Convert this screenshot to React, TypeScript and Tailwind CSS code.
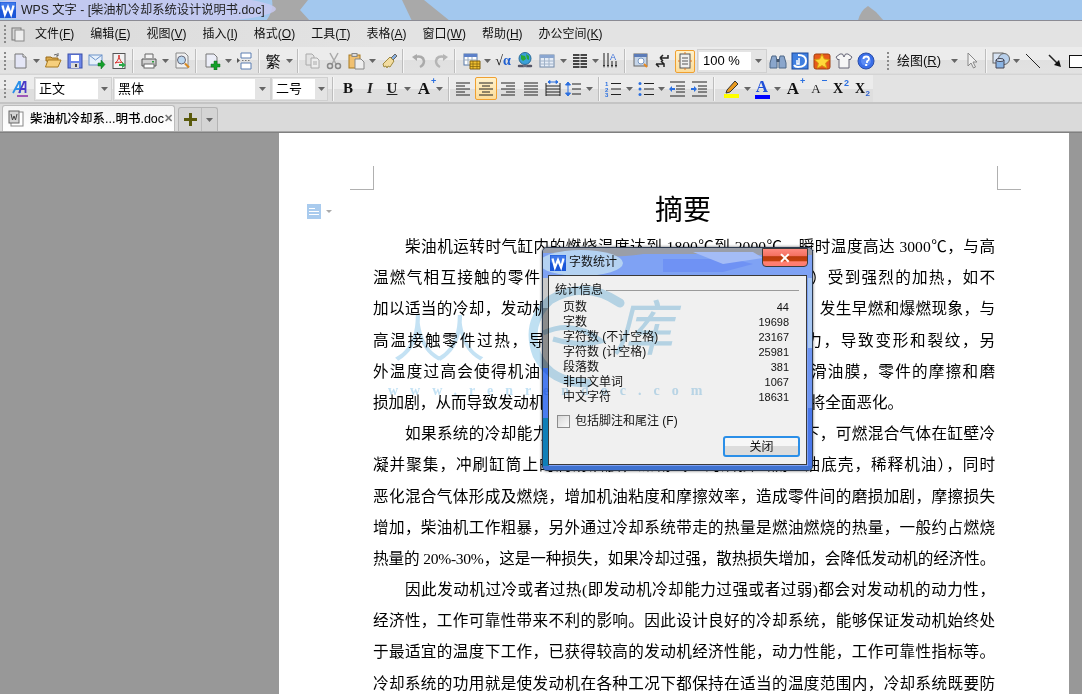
import type { ReactNode } from 'react';

const BODY_LINES: { text: string; indent?: boolean; left?: boolean; tight?: boolean }[] = [
    { text: '柴油机运转时气缸内的燃烧温度达到 1800℃到 2000℃，瞬时温度高达 3000℃，与高', indent: true },
    { text: '温燃气相互接触的零件（如气缸盖、活塞、气缸套及气门等）受到强烈的加热，如不' },
    { text: '加以适当的冷却，发动机会过热，充气效率下降，燃烧不正常，发生早燃和爆燃现象，与' },
    { text: '高温接触零件过热，导致机械性能下降，产生较大的热应力，导致变形和裂纹，另' },
    { text: '外温度过高会使得机油变质，粘度下降，难以形成良好的润滑油膜，零件的摩擦和磨' },
    { text: '损加剧，从而导致发动机动力性、经济性、可靠性等各项性能都将全面恶化。', left: true },
    { text: '如果系统的冷却能力过强，发动机长期在过冷的工作条件下，可燃混合气体在缸壁冷', indent: true },
    { text: '凝并聚集，冲刷缸筒上的润滑油膜，加剧气缸的磨损（流入油底壳，稀释机油），同时' },
    { text: '恶化混合气体形成及燃烧，增加机油粘度和摩擦效率，造成零件间的磨损加剧，摩擦损失' },
    { text: '增加，柴油机工作粗暴，另外通过冷却系统带走的热量是燃油燃烧的热量，一般约占燃烧' },
    { text: '热量的 20%-30%，这是一种损失，如果冷却过强，散热损失增加，会降低发动机的经济性。', tight: true },
    { text: '因此发动机过冷或者过热(即发动机冷却能力过强或者过弱)都会对发动机的动力性，', indent: true },
    { text: '经济性，工作可靠性带来不利的影响。因此设计良好的冷却系统，能够保证发动机始终处' },
    { text: '于最适宜的温度下工作，已获得较高的发动机经济性能，动力性能，工作可靠性指标等。' },
    { text: '冷却系统的功用就是使发动机在各种工况下都保持在适当的温度范围内，冷却系统既要防' },
];

const STATS = [
    ['页数', '44'],
    ['字数', '19698'],
    ['字符数 (不计空格)', '23167'],
    ['字符数 (计空格)', '25981'],
    ['段落数', '381'],
    ['非中文单词', '1067'],
    ['中文字符', '18631'],
];

const MENUS = [
    ['文件', 'F'],
    ['编辑', 'E'],
    ['视图', 'V'],
    ['插入', 'I'],
    ['格式', 'O'],
    ['工具', 'T'],
    ['表格', 'A'],
    ['窗口', 'W'],
    ['帮助', 'H'],
    ['办公空间', 'K'],
];

function Ico({ children }: { children: ReactNode }) {
    return (
        <svg width="18" height="18" viewBox="0 0 18 18" fill="none">
            {children}
        </svg>
    );
}

function Btn({ children, className = '' }: { children: ReactNode; className?: string }) {
    return <div className={`w-[22px] h-[22px] shrink-0 flex items-center justify-center ${className}`}>{children}</div>;
}

function Drop({ className = 'w-[11px]' }: { className?: string }) {
    return (
        <div className={`${className} shrink-0 flex items-center justify-center`}>
            <svg width="7" height="4" viewBox="0 0 7 4">
                <path d="M0 0h7L3.5 4z" fill="#666" />
            </svg>
        </div>
    );
}

function Sep({ className = '' }: { className?: string }) {
    return (
        <div className={`w-[6px] h-[24px] shrink-0 flex justify-center ${className}`}>
            <div className="w-px bg-[#bdbdbd] border-r border-[#f6f6f6] box-content" />
        </div>
    );
}

function Grip({ className = '' }: { className?: string }) {
    return (
        <div className={`w-[9px] shrink-0 flex flex-col items-center gap-[2px] ${className}`}>
            <i className="block w-[2px] h-[2px] bg-[#8a8a8a]" />
            <i className="block w-[2px] h-[2px] bg-[#8a8a8a]" />
            <i className="block w-[2px] h-[2px] bg-[#8a8a8a]" />
            <i className="block w-[2px] h-[2px] bg-[#8a8a8a]" />
            <i className="block w-[2px] h-[2px] bg-[#8a8a8a]" />
        </div>
    );
}

function WLogo({ size = 16 }: { size?: number }) {
    return (
        <svg width={size} height={size} viewBox="0 0 16 16" className="shrink-0">
            <rect width="16" height="16" fill="#1a56d8" />
            <rect x="0.5" y="0.5" width="15" height="7" fill="#3f78ea" />
            <path d="M2.5 3.5l2.4 9 3.1-7.5 3.1 7.5 2.4-9" stroke="#fff" strokeWidth="2.2" fill="none" />
        </svg>
    );
}

const NewDoc = () => (
    <Ico>
        <path d="M4 2h8l3 3v11H4z" fill="#e4e6f6" stroke="#777" />
        <path d="M12 2v3h3" fill="#fff" stroke="#777" />
    </Ico>
);
const OpenIco = () => (
    <Ico>
        <path d="M2 5h5l1 1h6v3H2z" fill="#d9a94c" stroke="#9a6a18" />
        <path d="M1.5 15l2.5-7h13l-3 7z" fill="#f6cf7c" stroke="#a87a20" />
        <path d="M10 3q3-2 4 1M14 1v3h-2" stroke="#666" />
    </Ico>
);
const SaveIco = () => (
    <Ico>
        <rect x="2" y="2" width="14" height="14" fill="#6d86e8" stroke="#3b4fa8" />
        <rect x="5" y="3" width="8" height="6" fill="#fff" />
        <rect x="5" y="11" width="8" height="5" fill="#dcdcdc" />
        <rect x="9" y="12" width="2" height="3" fill="#444" />
    </Ico>
);
const MailIco = () => (
    <Ico>
        <rect x="1" y="3" width="13" height="10" fill="#e6f0fb" stroke="#6d93c9" />
        <path d="M1 3l6.500 5 6.500-5" stroke="#6d93c9" />
        <path d="M10 11h3V8l4 4.500-4 4.500v-3h-3z" fill="#14a02a" stroke="#0c6a1a" strokeWidth=".5" />
    </Ico>
);
const PdfIco = () => (
    <Ico>
        <rect x="3" y="1.500" width="12" height="15" fill="#f2f2f2" stroke="#555" />
        <path d="M9 3c0 4-2 7-4 8 3-1 6-1 8 0-2-1-4-4-4-8z" stroke="#d9302a" />
        <path d="M9 12h3v-2l4 3-4 3v-2H9z" fill="#2ea84a" />
    </Ico>
);
const PrintIco = () => (
    <Ico>
        <path d="M5 6V2h8v4" fill="#f4f4f4" stroke="#666" />
        <path d="M2 7h14v7H2z" fill="#d2d2d2" stroke="#555" />
        <rect x="4" y="12" width="10" height="4" fill="#fff" stroke="#666" />
        <rect x="12" y="9" width="2" height="1.500" fill="#2a9a3a" />
    </Ico>
);
const PreviewIco = () => (
    <Ico>
        <path d="M3 1h9l3 3v12H3z" fill="#f0f0f0" stroke="#888" />
        <circle cx="8.500" cy="8" r="4" fill="#bcd8f0" stroke="#667" />
        <path d="M12 11.500l4 4" stroke="#d98a20" strokeWidth="2.200" />
    </Ico>
);
const NewPlusIco = () => (
    <Ico>
        <path d="M3 2h8l3 3v10H3z" fill="#eceef8" stroke="#777" />
        <path d="M11 9h3v3h3v3h-3v3h-3v-3H8v-3h3z" fill="#14a02a" stroke="#0c6a1a" strokeWidth=".5" />
    </Ico>
);
const SplitIco = () => (
    <Ico>
        <path d="M5 1h10v5H5zM5 11h10v6H5z" fill="#fff" stroke="#5d7fb2" />
        <path d="M1 6l3 2.500L1 11z" fill="#555" />
        <path d="M6 8.500h1.500M9 8.500h1.500M12 8.500h1.500" stroke="#777" />
    </Ico>
);
const CopyIco = () => (
    <Ico>
        <path d="M3 2h6l2 2v9H3z" fill="#e3e3e3" stroke="#aaa" />
        <path d="M8 6h6l2 2v8H8z" fill="#ededed" stroke="#aaa" />
        <path d="M10 10h4M10 12h4" stroke="#aaa" />
    </Ico>
);
const CutIco = () => (
    <Ico>
        <path d="M5 1l6 11M13 1L7 12" stroke="#aaa" strokeWidth="1.500" />
        <circle cx="5" cy="14" r="2.500" stroke="#888" strokeWidth="1.500" />
        <circle cx="13" cy="14" r="2.500" stroke="#888" strokeWidth="1.500" />
    </Ico>
);
const PasteIco = () => (
    <Ico>
        <rect x="2" y="3" width="11" height="13" fill="#f0c070" stroke="#a87a20" />
        <rect x="5" y="1.500" width="5" height="3" fill="#ddd" stroke="#888" />
        <path d="M8 7h6l3 3v7H8z" fill="#eee" stroke="#888" />
    </Ico>
);
const BrushIco = () => (
    <Ico>
        <path d="M11 6l4-4 2 2-4 4z" fill="#8ab0dd" stroke="#666" />
        <path d="M3 12l7-7 4 4-4 6-2-1-1 2-1-2-2 1z" fill="#f2dca0" stroke="#a08a40" />
    </Ico>
);
const UndoIco = () => (
    <Ico>
        <path d="M5 5q8-2 9 4 0 4-4 6" stroke="#aaa" strokeWidth="2.500" />
        <path d="M2 5l5-3v7z" fill="#aaa" />
    </Ico>
);
const RedoIco = () => (
    <Ico>
        <path d="M13 5q-8-2-9 4 0 4 4 6" stroke="#b5b5b5" strokeWidth="2.500" />
        <path d="M16 5l-5-3v7z" fill="#b5b5b5" />
    </Ico>
);
const TableIco = () => (
    <Ico>
        <rect x="1" y="2" width="13" height="11" fill="#fff" stroke="#5678a8" />
        <rect x="1" y="2" width="13" height="3" fill="#5c80c8" />
        <path d="M5 5v8M9 5v8M1 8h13" stroke="#9ab" />
        <path d="M7 9h10v8H7z" fill="#f0c030" stroke="#806010" />
        <path d="M10 9v8M14 9v8M7 12h10M7 14.500h10" stroke="#806010" strokeWidth=".7" />
    </Ico>
);
const GlobeIco = () => (
    <Ico>
        <circle cx="9" cy="6.500" r="6" fill="#3aa0d8" stroke="#2a6a98" />
        <path d="M5 3l4 1 1 3-3 2-2-2zM10 2l3 2 0 4-2-1z" fill="#28a838" />
        <path d="M3 14h5M10 14h5" stroke="#556" strokeWidth="2.500" strokeLinecap="round" />
        <path d="M7 14h4" stroke="#889" />
    </Ico>
);
const GridIco = () => (
    <Ico>
        <rect x="2" y="3" width="14" height="12" fill="#e6edf7" stroke="#7088a8" />
        <rect x="2" y="3" width="14" height="3" fill="#8aa6d0" />
        <path d="M6.500 6v9M11 6v9M2 9h14M2 12h14" stroke="#a0b2c8" />
    </Ico>
);
const ColsIco = () => (
    <Ico>
        <path d="M2 3h14M2 6h14M2 9h14M2 12h14M2 15h14" stroke="#111" strokeWidth="1.500" />
        <path d="M9 2v14" stroke="#e2e2e2" />
    </Ico>
);
const SortIco = () => (
    <Ico>
        <path d="M2 1v13M6 1v13M10 9v5M14 9v5" stroke="#222" />
        <path d="M1 13h2l-1 3zM5 13h2l-1 3zM9 13h2l-1 3zM13 13h2l-1 3z" fill="#222" />
        <text x="8" y="8" fontSize="9" fill="#3a6fd8" fontFamily="Liberation Sans">A</text>
    </Ico>
);
const FormIco = () => (
    <Ico>
        <rect x="2" y="2" width="13" height="12" fill="#c6d6ea" stroke="#666" />
        <rect x="2" y="2" width="13" height="3" fill="#5c7cb8" />
        <circle cx="9" cy="9" r="3" fill="#fff" stroke="#7a98c0" />
        <path d="M12 12l3 3" stroke="#e88a20" strokeWidth="2" />
    </Ico>
);
const ReviewIco = () => (
    <Ico>
        <path d="M15 3v3H7M7 6l3-3M7 6l3 3" stroke="#222" strokeWidth="1.500" />
        <path d="M3 12h8v3M11 12l-3-3M3 12l3 3" stroke="#222" strokeWidth="1.500" />
    </Ico>
);
const PageIco = () => (
    <Ico>
        <rect x="4" y="2" width="10" height="14" fill="#efefef" stroke="#555" />
        <path d="M6 6h6M6 9h6M6 12h6" stroke="#555" />
        <path d="M2 9h2M14 9h2M9 0v2M9 16v2" stroke="#d8742a" />
    </Ico>
);
const BinoIco = () => (
    <Ico>
        <path d="M3 4h4l1 5v7H1v-5zM15 4h-4l-1 5v7h7v-5z" fill="#8aa6cc" stroke="#4f6888" />
        <rect x="7.500" y="7" width="3" height="3" fill="#44566e" />
    </Ico>
);
const BlueIco = () => (
    <Ico>
        <rect x="1" y="1" width="16" height="16" fill="#3f7fe0" stroke="#1d4a9c" />
        <path d="M7 3q8 0 8 6t-8 6q-3 0-4-2" stroke="#fff" strokeWidth="2" />
        <path d="M8 6v6H6V8" stroke="#fff" strokeWidth="1.500" />
    </Ico>
);
const StarIco = () => (
    <Ico>
        <rect x="1" y="2" width="16" height="15" rx="2" fill="#e85a1c" stroke="#a0400c" />
        <path d="M9 2l2.300 5 5 .6-3.700 3.500 1 5L9 13.600 4.400 16.100l1-5L1.700 7.600l5-.6z" fill="#ffd83a" stroke="#d89a10" />
    </Ico>
);
const ShirtIco = () => (
    <Ico>
        <path d="M5 2h2.500L9 5l1.500-3H13l4 3-2 3-1-1v9H4V7L3 8 1 5z" fill="#f6f6f6" stroke="#667" />
    </Ico>
);
const HelpIco = () => (
    <Ico>
        <circle cx="9" cy="9" r="8" fill="#3a6ee8" stroke="#2a4ea8" />
        <circle cx="9" cy="9" r="5" fill="#5c8cf4" />
        <path d="M6.500 7q0-2.500 2.700-2.500T12 7q0 1.500-2 2.300V11" stroke="#fff" strokeWidth="1.800" />
        <rect x="8.200" y="12" width="2" height="2" fill="#fff" />
    </Ico>
);
const CursorIco = () => (
    <Ico>
        <path d="M5 1v13l3-3 2.500 5 2-1-2.500-5h4z" fill="#f0f0f0" stroke="#888" />
    </Ico>
);
const ShapesIco = () => (
    <Ico>
        <rect x="1" y="1" width="10" height="10" fill="#d8e4f4" stroke="#666" />
        <circle cx="12" cy="7" r="5.500" fill="#b8d0ec" stroke="#666" />
        <path d="M4 8h8v8H4z" fill="#8ab4e4" stroke="#445" />
        <ellipse cx="8" cy="8" rx="4" ry="1.500" fill="#cfe2f6" stroke="#445" />
    </Ico>
);
const LineIco = () => (
    <Ico>
        <path d="M2 2l14 14" stroke="#222" />
    </Ico>
);
const ArrowLineIco = () => (
    <Ico>
        <path d="M3 3l9 9" stroke="#222" strokeWidth="1.500" />
        <path d="M15 15l-7-2 5-5z" fill="#111" />
    </Ico>
);
const StyleIco = () => (
    <Ico>
        <path d="M1 13L7 2h1v11M3.500 9H8" stroke="#2a8fe8" strokeWidth="1.800" />
        <path d="M7 13l5-11h1.500v11M9 9h5" stroke="#4a3ac8" strokeWidth="1.800" />
        <path d="M5 16h11" stroke="#8a2aa8" strokeWidth="1.500" />
    </Ico>
);
const Lines = ({ mode }: { mode: 'l' | 'c' | 'r' | 'j' }) => {
    const short = mode === 'l' ? 'M2 6h9M2 12h9' : mode === 'c' ? 'M5 6h8M5 12h8' : mode === 'r' ? 'M7 6h9M7 12h9' : 'M2 6h14M2 12h14';
    return (
        <Ico>
            <path d={`M2 3h14M2 9h14M2 15h14 ${short}`} stroke="#222" />
        </Ico>
    );
};
const DistIco = () => (
    <Ico>
        <path d="M2 6h14M2 9h14M2 12h14M2 15h14M2 3v13M16 3v13" stroke="#222" />
        <path d="M4 2h10M4 2l2-1.500v3zM14 2l-2-1.500v3z" stroke="#2a6fe0" fill="#2a6fe0" />
    </Ico>
);
const SpacingIco = () => (
    <Ico>
        <path d="M7 4h9M7 9h9M7 14h9" stroke="#222" />
        <path d="M3 2l2.500 3h-5zM3 16l2.500-3h-5zM3 5v8" fill="#2a6fe0" stroke="#2a6fe0" />
    </Ico>
);
const NumIco = () => (
    <Ico>
        <path d="M7 3.500h10M7 9h10M7 14.500h10" stroke="#222" />
        <text x="1" y="6" fontSize="6" fill="#2a6fe0" fontFamily="Liberation Sans" fontWeight="700">1</text>
        <text x="1" y="11.500" fontSize="6" fill="#2a6fe0" fontFamily="Liberation Sans" fontWeight="700">2</text>
        <text x="1" y="17" fontSize="6" fill="#2a6fe0" fontFamily="Liberation Sans" fontWeight="700">3</text>
    </Ico>
);
const BulletIco = () => (
    <Ico>
        <path d="M7 3.500h10M7 9h10M7 14.500h10" stroke="#222" />
        <circle cx="3" cy="3.500" r="1.500" fill="#2a6fe0" />
        <circle cx="3" cy="9" r="1.500" fill="#2a6fe0" />
        <circle cx="3" cy="14.500" r="1.500" fill="#2a6fe0" />
    </Ico>
);
const IndentIco = ({ flip }: { flip?: boolean }) => (
    <Ico>
        <path d="M2 2h15M8 6h9M8 9h9M8 12h9M2 16h15" stroke="#222" />
        {flip ? (
            <path d="M7 8v2H4v2L1 9l3-3v2z" fill="#2a6fe0" />
        ) : (
            <path d="M1 8v2h3v2l3-3-3-3v2z" fill="#2a6fe0" />
        )}
    </Ico>
);
const PenIco = () => (
    <svg width="16" height="20" viewBox="0 0 16 20" fill="none">
        <path d="M3 11l8-9 3 3-8 8-4 1z" fill="#e89a20" stroke="#333" />
        <rect x="0" y="15" width="15" height="4" fill="#ffff00" />
    </svg>
);
const ColorA = () => (
    <div className="relative w-[16px] h-[20px] flex flex-col items-center">
        <span className="font-['Liberation_Serif',serif] font-bold text-[17px] leading-[16px] text-[#1f4fd8]">A</span>
        <i className="block w-[15px] h-[4px] bg-[#0000ff]" />
    </div>
);
const SerifGlyph = ({ ch, className, sup, sub }: { ch: string; className: string; sup?: string; sub?: string }) => (
    <span className={`relative font-['Liberation_Serif',serif] font-bold text-[#111] ${className}`}>
        {ch}
        {sup && <span className="absolute -right-[6px] -top-[3px] text-[9px] leading-[9px] font-['Liberation_Sans',sans-serif] text-[#2a6fe0]">{sup}</span>}
        {sub && <span className="absolute -right-[5px] -bottom-[2px] text-[8px] leading-[8px] font-['Liberation_Sans',sans-serif] text-[#2a5fd0]">{sub}</span>}
    </span>
);

function Select({ label, className, boxClass }: { label: string; className: string; boxClass: string }) {
    return (
        <div className={`h-[24px] shrink-0 flex items-center bg-[#e4e4e4] border border-[#d0d0d0] ${className}`}>
            <div className={`h-[20px] bg-white flex items-center text-[13px] text-black ml-[1px] pl-[3px] ${boxClass}`}>{label}</div>
            <Drop className="flex-1" />
        </div>
    );
}

function WordStatsDialog() {
    return (
        <div className="absolute left-[542px] top-[247px] w-[271px] h-[224px] rounded-[5px] border border-[#2c3a50] bg-[#7fa2f4] flex flex-col overflow-hidden shadow-[0_0_3px_rgba(0,0,0,0.6)]">
            {/* glass patches */}
            <svg className="absolute inset-0" width="271" height="224" viewBox="0 0 271 224">
                <path d="M0 0h271v7H215q-30 6-55-1h-60Q60 12 30 5H0z" fill="#9a9ea8" />
                <path d="M120 11h70l20 5-30 8h-60z" fill="#6f92f4" />
                <path d="M150 4h60l10 6-40 6z" fill="#a4bcf6" />
                <ellipse cx="38" cy="15" rx="42" ry="13" fill="#b4d2f2" />
                <path d="M0 30h6v30H0z" fill="#c9c9c9" />
                <path d="M0 60h6v60H0z" fill="#8c8c8c" />
                <path d="M0 120h6v50H0z" fill="#4a7cf0" />
                <path d="M0 170h6v54H0z" fill="#0f7fb8" />
                <path d="M265 30h6v70h-6z" fill="#a8c8f4" />
                <path d="M265 100h6v60h-6z" fill="#6f96f2" />
                <path d="M265 160h6v64h-6z" fill="#4a78ea" />
                <path d="M0 218h271v6H0z" fill="#3f72d0" />
            </svg>
            <div className="relative h-[27px] shrink-0 flex items-start">
                <div className="mt-[7px] ml-[7px]">
                    <WLogo size={16} />
                </div>
                <span className="ml-[3px] mt-[6px] text-[12px] leading-[16px] text-[#111]">字数统计</span>
                <div className="ml-auto mr-[4px] w-[46px] h-[19px] rounded-b-[4px] border border-[#3c3c3c] bg-[linear-gradient(#ff8a80_0%,#f47060_40%,#b83a0c_45%,#c4400c_70%,#ff8070_75%,#ff7a70_100%)] flex items-center justify-center text-white font-bold text-[14px] leading-none font-['Liberation_Sans',sans-serif]">
                    ✕
                </div>
            </div>
            <div className="relative mx-[5px] mb-[5px] flex-1 bg-[#f0f0f0] border border-[#3a3a3a] pl-[6px] pr-[7px] pt-[6px] text-[12px] text-[#111]">
                <div className="flex items-center h-[16px]">
                    <span className="leading-[16px]">统计信息</span>
                    <div className="flex-1 h-px bg-[#9a9a9a] ml-[3px]" />
                </div>
                <div className="mt-[2px] pl-[8px] pr-[10px]">
                    {STATS.map(([k, v]) => (
                        <div key={k} className="flex justify-between h-[15px] items-center leading-[15px]">
                            <span className="whitespace-nowrap">{k}</span>
                            <span className="text-[11px]">{v}</span>
                        </div>
                    ))}
                </div>
                <div className="flex items-center mt-[8px] ml-[2px]">
                    <div className="w-[13px] h-[13px] border border-[#8c8c8c] bg-[linear-gradient(135deg,#d8d8d8,#fafafa)]" />
                    <span className="ml-[5px] leading-[16px]">包括脚注和尾注 (F)</span>
                </div>
                <div className="flex justify-end mt-[7px] -mr-[1px]">
                    <div className="w-[77px] h-[21px] rounded-[3px] border-2 border-[#2b8fe8] bg-[linear-gradient(#f6f6f6_50%,#dcdcdc_50%)] flex items-center justify-center">关闭</div>
                </div>
            </div>
        </div>
    );
}

export default function App() {
    return (
        <div className="relative w-[1082px] h-[694px] overflow-hidden flex flex-col bg-[#989898] font-['Liberation_Sans','Noto_Sans_CJK_SC',sans-serif] text-[12px] text-[#111]">
            {/* title bar */}
            <div className="relative h-[21px] shrink-0 bg-[#a3c8ee] flex items-center overflow-hidden border-b border-[#8b8b94]">
                <svg className="absolute inset-0" width="1082" height="21" viewBox="0 0 1082 21">
                    <path d="M272 0h36l-8 10 10 11h-44q8-10 6-21z" fill="#a8a8a8" />
                    <path d="M402 0h22l26 21h-38z" fill="#a9a9a9" />
                    <path d="M858 21q2-10 10-15l8 6 8 9z" fill="#a9a9a9" />
                    <ellipse cx="130" cy="9" rx="146" ry="16" fill="#c8c9f0" opacity="0.85" />
                </svg>
                <div className="relative flex items-center">
                    <WLogo size={16} />
                    <span className="ml-[5px] text-[12.25px] leading-[18px] text-[#222] whitespace-nowrap">WPS 文字 - [柴油机冷却系统设计说明书.doc]</span>
                </div>
            </div>

            {/* menu bar */}
            <div className="h-[26px] shrink-0 flex items-center bg-[linear-gradient(90deg,#dadada,#e3e3e3_35%)]">
                <Grip />
                <div className="w-[16px] flex items-center justify-center">
                    <svg width="15" height="15" viewBox="0 0 15 15">
                        <rect x="2" y="1" width="9" height="12" fill="#d8d8d8" stroke="#777" />
                        <rect x="5" y="3" width="9" height="11" fill="#eee" stroke="#888" />
                    </svg>
                </div>
                <div className="flex items-center gap-[16px] ml-[10px]">
                    {MENUS.map(([name, key]) => (
                        <span key={name} className="leading-[16px] whitespace-nowrap">
                            {name}(<span className="underline">{key}</span>)
                        </span>
                    ))}
                </div>
            </div>

            {/* standard toolbar */}
            <div className="h-[28px] shrink-0 flex items-center bg-[linear-gradient(#ececec_45%,#e0e0e0_45%,#e2e2e2_92%,#d0d0d0)]">
                <Grip />
                <Btn><NewDoc /></Btn>
                <Drop />
                <Btn><OpenIco /></Btn>
                <Btn><SaveIco /></Btn>
                <Btn><MailIco /></Btn>
                <Btn><PdfIco /></Btn>
                <Sep />
                <Btn className="ml-[2px]"><PrintIco /></Btn>
                <Drop />
                <Btn><PreviewIco /></Btn>
                <Sep />
                <Btn className="ml-[2px]"><NewPlusIco /></Btn>
                <Drop />
                <Btn><SplitIco /></Btn>
                <Sep />
                <Btn><span className="text-[15px] leading-none">繁</span></Btn>
                <Drop />
                <Sep />
                <Btn><CopyIco /></Btn>
                <Btn><CutIco /></Btn>
                <Btn><PasteIco /></Btn>
                <Drop />
                <Btn><BrushIco /></Btn>
                <Sep />
                <Btn className="ml-[2px]"><UndoIco /></Btn>
                <Btn><RedoIco /></Btn>
                <Sep />
                <Btn className="ml-[3px]"><TableIco /></Btn>
                <Drop className="w-[9px]" />
                <Btn><span className="font-['Liberation_Serif',serif] text-[14px] leading-none whitespace-nowrap">√<span className="text-[#1f5fd0] font-bold">α</span></span></Btn>
                <Btn><GlobeIco /></Btn>
                <Btn><GridIco /></Btn>
                <Drop />
                <Btn><ColsIco /></Btn>
                <Drop className="w-[9px]" />
                <Btn><SortIco /></Btn>
                <Sep />
                <Btn className="ml-[2px]"><FormIco /></Btn>
                <Btn className="!w-[20px]"><ReviewIco /></Btn>
                <div className="ml-[3px] w-[20px] h-[23px] shrink-0 rounded-[2px] border border-[#f0a030] bg-[linear-gradient(#fff2cc,#fcdc9a)] flex items-center justify-center">
                    <PageIco />
                </div>
                <div className="ml-[2px] w-[70px] h-[24px] shrink-0 flex items-center bg-[#e4e4e4] border border-[#d0d0d0]">
                    <div className="w-[52px] h-[18px] bg-white ml-[1px] pl-[4px] flex items-center text-[13px] text-black whitespace-nowrap">100 %</div>
                    <Drop className="flex-1" />
                </div>
                <Btn><BinoIco /></Btn>
                <Btn><BlueIco /></Btn>
                <Btn><StarIco /></Btn>
                <Btn><ShirtIco /></Btn>
                <Btn><HelpIco /></Btn>
                <Grip className="ml-[6px]" />
                <span className="ml-[5px] w-[40px] text-[13px] leading-[16px] whitespace-nowrap">绘图(<span className="underline">R</span>)</span>
                <Drop className="ml-[12px] w-[10px]" />
                <Btn className="ml-[2px]"><CursorIco /></Btn>
                <Sep />
                <Btn className="ml-[1px]"><ShapesIco /></Btn>
                <Drop className="w-[9px]" />
                <Btn className="ml-[1px]"><LineIco /></Btn>
                <Btn><ArrowLineIco /></Btn>
                <div className="ml-[3px] w-[20px] h-[13px] shrink-0 border border-[#111] bg-white" />
            </div>

            {/* format toolbar */}
            <div className="h-[29px] shrink-0 flex items-center bg-[#e3e3e3] border-b-2 border-[#c4c4c4]">
                <div className="w-[873px] h-full shrink-0 flex items-center bg-[linear-gradient(#ececec_50%,#dedede_50%)]">
                    <Grip />
                    <Btn className="ml-[1px]"><StyleIco /></Btn>
                    <Select label="正文" className="ml-[2px] w-[78px]" boxClass="w-[62px]" />
                    <Select label="黑体" className="ml-[1px] w-[158px]" boxClass="w-[140px]" />
                    <Select label="二号" className="w-[57px]" boxClass="w-[42px]" />
                    <Sep className="ml-[2px]" />
                    <Btn className="ml-[1px]"><SerifGlyph ch="B" className="text-[15px]" /></Btn>
                    <Btn><span className="font-['Liberation_Serif',serif] italic font-bold text-[15px] text-[#222]">I</span></Btn>
                    <Btn><span className="font-['Liberation_Serif',serif] underline font-bold text-[15px] text-[#222]">U</span></Btn>
                    <Drop className="w-[9px]" />
                    <Btn className="ml-[1px]"><SerifGlyph ch="A" className="text-[17px] leading-none" sup="+" /></Btn>
                    <Drop className="w-[9px]" />
                    <Sep className="ml-[2px]" />
                    <Btn><Lines mode="l" /></Btn>
                    <div className="ml-[1px] w-[22px] h-[23px] shrink-0 rounded-[2px] border border-[#f0a030] bg-[linear-gradient(#fff2cc,#fcdc9a)] flex items-center justify-center">
                        <Lines mode="c" />
                    </div>
                    <Btn><Lines mode="r" /></Btn>
                    <Btn className="ml-[1px]"><Lines mode="j" /></Btn>
                    <Btn className="!w-[21px]"><DistIco /></Btn>
                    <Btn><SpacingIco /></Btn>
                    <Drop className="w-[9px]" />
                    <Sep className="ml-[2px]" />
                    <Btn><NumIco /></Btn>
                    <Drop className="w-[10px]" />
                    <Btn className="ml-[1px]"><BulletIco /></Btn>
                    <Drop className="w-[9px]" />
                    <Btn><IndentIco flip /></Btn>
                    <Btn><IndentIco /></Btn>
                    <Sep className="ml-[1px]" />
                    <Btn className="ml-[4px]"><PenIco /></Btn>
                    <Drop className="w-[8px]" />
                    <Btn><ColorA /></Btn>
                    <Drop className="w-[9px]" />
                    <Btn><SerifGlyph ch="A" className="text-[17px] leading-none" sup="+" /></Btn>
                    <Btn className="ml-[1px]"><span className="relative font-['Liberation_Serif',serif] text-[13px] text-[#222]">A<i className="absolute -right-[6px] top-[1px] block w-[5px] h-px bg-[#2a6fe0]" /></span></Btn>
                    <Btn><SerifGlyph ch="X" className="text-[14px] leading-none" sup="2" /></Btn>
                    <Btn><SerifGlyph ch="X" className="text-[14px] leading-none" sub="2" /></Btn>
                </div>
            </div>

            {/* tab bar */}
            <div className="h-[28px] shrink-0 flex items-end bg-[#dadada] border-b border-[#a8a8a8] pl-[2px]">
                <div className="w-[173px] h-[26px] rounded-t-[3px] border border-b-0 border-[#bcbcbc] bg-[linear-gradient(#f4f4f4,#ffffff)] flex items-center pl-[5px]">
                    <svg width="16" height="17" viewBox="0 0 16 17" className="shrink-0">
                        <rect x="3" y="2" width="12" height="14" fill="#fff" stroke="#888" />
                        <rect x="1" y="1" width="10" height="12" fill="#d4d4d4" stroke="#666" />
                        <path d="M3 4l1.500 6L6 6l1.500 4L9 4" stroke="#444" fill="none" />
                    </svg>
                    <span className="ml-[6px] text-[12.5px] leading-[16px] font-medium text-black whitespace-nowrap">柴油机冷却系...明书.doc</span>
                    <span className="ml-auto mr-[2px] text-[11px] font-bold text-[#777]">✕</span>
                </div>
                <div className="ml-[3px] w-[40px] h-[24px] rounded-t-[3px] border border-b-0 border-[#b4b4b4] bg-[#d4d4d4] flex">
                    <div className="flex-1 flex items-center justify-center border-r border-[#bcbcbc]">
                        <svg width="13" height="13" viewBox="0 0 13 13">
                            <path d="M5 0h3v5h5v3H8v5H5V8H0V5h5z" fill="#5a5a0c" />
                        </svg>
                    </div>
                    <Drop className="w-[15px]" />
                </div>
            </div>

            {/* document area */}
            <div className="flex-1 flex pl-[279px] pr-[13px] border-t border-[#808080]">
                <div className="w-[790px] h-full bg-white font-['Liberation_Serif','Noto_Sans_CJK_SC',serif] text-black overflow-hidden">
                    <div className="flex justify-between pl-[71px] pr-[48px] pt-[33px]">
                        <div className="w-[24px] h-[24px] border-r border-b border-[#b0b0b0]" />
                        <div className="w-[24px] h-[24px] border-l border-b border-[#b0b0b0]" />
                    </div>
                    <div className="flex items-center h-[40px] mt-[1px]">
                        <div className="ml-[28px] w-[14px] h-[15px] bg-[#a9cbee] flex flex-col gap-[2px] pt-[4px] px-[2px]">
                            <i className="block h-px w-[6px] bg-white" />
                            <i className="block h-px bg-white" />
                            <i className="block h-px bg-white" />
                        </div>
                        <div className="ml-[5px] w-[7px]">
                            <svg width="6" height="3" viewBox="0 0 6 3"><path d="M0 0h6L3 3z" fill="#aaa" /></svg>
                        </div>
                        <div className="ml-[39px] w-[622px] text-center text-[28px] leading-[40px]">摘要</div>
                    </div>
                    <div className="ml-[94px] w-[622px] text-[15.6px] leading-[31.2px]">
                        {BODY_LINES.map((l, i) => (
                            <div
                                key={i}
                                className={`h-[31.2px] overflow-hidden ${l.indent ? 'pl-[32px]' : ''} ${l.left ? '' : '[text-align:justify] [text-align-last:justify]'} ${l.tight ? 'tracking-[-0.3px]' : ''}`}
                            >
                                {l.text}
                            </div>
                        ))}
                    </div>
                </div>
            </div>

            <WordStatsDialog />

            {/* watermark */}
            <div className="absolute left-[385px] top-[285px] w-[300px] h-[120px] pointer-events-none mix-blend-multiply">
                <svg className="absolute left-[140px] top-0" width="110" height="110" viewBox="0 0 110 110" fill="none">
                    <path d="M95 18Q60-6 25 15 0 38 12 70q14 28 50 28" stroke="#bfe0f2" strokeWidth="9" strokeLinecap="round" />
                    <path d="M18 48q30-14 58 8-20 6-48-2" stroke="#bfe0f2" strokeWidth="5" />
                </svg>
                <span className="absolute left-[8px] top-[22px] text-[50px] leading-[56px] text-[#c4e2f4] font-['Noto_Sans_CJK_SC',sans-serif] [letter-spacing:-8px]">人人</span>
                <span className="absolute left-[228px] top-[6px] text-[60px] leading-[66px] italic text-[#bfe0f2] font-['Noto_Sans_CJK_SC',sans-serif]">库</span>
                <span className="absolute left-[3px] top-[98px] text-[14px] leading-[16px] font-bold tracking-[12px] whitespace-nowrap text-[#c4e2f4] font-['Liberation_Serif',serif]">www.renrendoc.com</span>
            </div>
        </div>
    );
}
